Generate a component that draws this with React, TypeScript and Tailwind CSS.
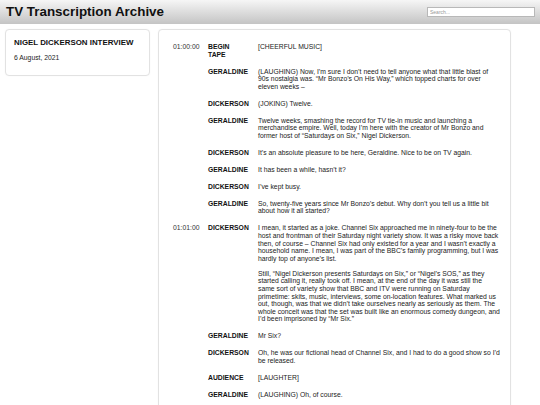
import React from 'react';

type Line = {
  time?: string;
  speaker: string;
  text: string[];
};

const lines: Line[] = [
  { time: '01:00:00', speaker: 'BEGIN\nTAPE', text: ['[CHEERFUL MUSIC]'] },
  {
    speaker: 'GERALDINE',
    text: [
      '(LAUGHING) Now, I’m sure I don’t need to tell anyone what that little blast of 90s nostalgia was. “Mr Bonzo’s On His Way,” which topped charts for over eleven weeks –',
    ],
  },
  { speaker: 'DICKERSON', text: ['(JOKING) Twelve.'] },
  {
    speaker: 'GERALDINE',
    text: [
      'Twelve weeks, smashing the record for TV tie-in music and launching a merchandise empire. Well, today I’m here with the creator of Mr Bonzo and former host of “Saturdays on Six,” Nigel Dickerson.',
    ],
  },
  { speaker: 'DICKERSON', text: ['It’s an absolute pleasure to be here, Geraldine. Nice to be on TV again.'] },
  { speaker: 'GERALDINE', text: ['It has been a while, hasn’t it?'] },
  { speaker: 'DICKERSON', text: ['I’ve kept busy.'] },
  {
    speaker: 'GERALDINE',
    text: ['So, twenty-five years since Mr Bonzo’s debut. Why don’t you tell us a little bit about how it all started?'],
  },
  {
    time: '01:01:00',
    speaker: 'DICKERSON',
    text: [
      'I mean, it started as a joke. Channel Six approached me in ninety-four to be the host and frontman of their Saturday night variety show. It was a risky move back then, of course – Channel Six had only existed for a year and I wasn’t exactly a household name. I mean, I was part of the BBC’s family programming, but I was hardly top of anyone’s list.',
      'Still, “Nigel Dickerson presents Saturdays on Six,” or “Nigel’s SOS,” as they started calling it, really took off. I mean, at the end of the day it was still the same sort of variety show that BBC and ITV were running on Saturday primetime: skits, music, interviews, some on-location features. What marked us out, though, was that we didn’t take ourselves nearly as seriously as them. The whole conceit was that the set was built like an enormous comedy dungeon, and I’d been imprisoned by “Mr Six.”',
    ],
  },
  { speaker: 'GERALDINE', text: ['Mr Six?'] },
  {
    speaker: 'DICKERSON',
    text: ['Oh, he was our fictional head of Channel Six, and I had to do a good show so I’d be released.'],
  },
  { speaker: 'AUDIENCE', text: ['[LAUGHTER]'] },
  { speaker: 'GERALDINE', text: ['(LAUGHING) Oh, of course.'] },
];

export default function App() {
  return (
    <div className="min-h-[405px] bg-white font-['Liberation_Sans',Arial,sans-serif] text-[#222]">
      {/* Header */}
      <header className="flex h-[24px] items-center justify-between bg-linear-to-b from-[#f6f6f6] to-[#c4c4c4] pl-[6px] pr-[5px]">
        <h1 className="text-[13.4px] font-bold leading-none text-[#111]">TV Transcription Archive</h1>
        <input
          type="text"
          placeholder="Search..."
          className="h-[10px] w-[108px] border border-[#b8b8b8] bg-white px-[2px] text-[5px] text-[#333] placeholder:text-[#999] outline-none"
        />
      </header>

      <div className="flex items-start gap-[8px] px-[5px] pt-[5px]">
        {/* Interview info */}
        <div className="w-[145px] rounded-[4px] border border-[#e2e2e2] bg-white px-[8px] pt-[8px] pb-[13px] shadow-[0_0_2px_rgba(0,0,0,0.04)]">
          <h2 className="text-[7.9px] font-bold leading-[9px] text-[#111]">NIGEL DICKERSON INTERVIEW</h2>
          <p className="mt-[7px] text-[6.8px] leading-[8px]">6 August, 2021</p>
        </div>

        {/* Transcript */}
        <div className="w-[353px] rounded-[4px] border border-[#e2e2e2] bg-white pl-[14px] pt-[13px] pb-[12px] shadow-[0_0_2px_rgba(0,0,0,0.04)]">
          <div className="grid grid-cols-[35px_50px_242px] gap-y-[9.4px] text-[6.8px] leading-[7.6px]">
            {lines.map((line, i) => (
              <React.Fragment key={i}>
                <div className="text-[#333]">{line.time ?? ''}</div>
                <div className="whitespace-pre-line pr-[4px] font-bold text-[#111]">{line.speaker}</div>
                <div>
                  {line.text.map((p, j) => (
                    <p key={j} className={j > 0 ? 'mt-[7.4px]' : ''}>
                      {p}
                    </p>
                  ))}
                </div>
              </React.Fragment>
            ))}
          </div>
        </div>
      </div>
    </div>
  );
}
